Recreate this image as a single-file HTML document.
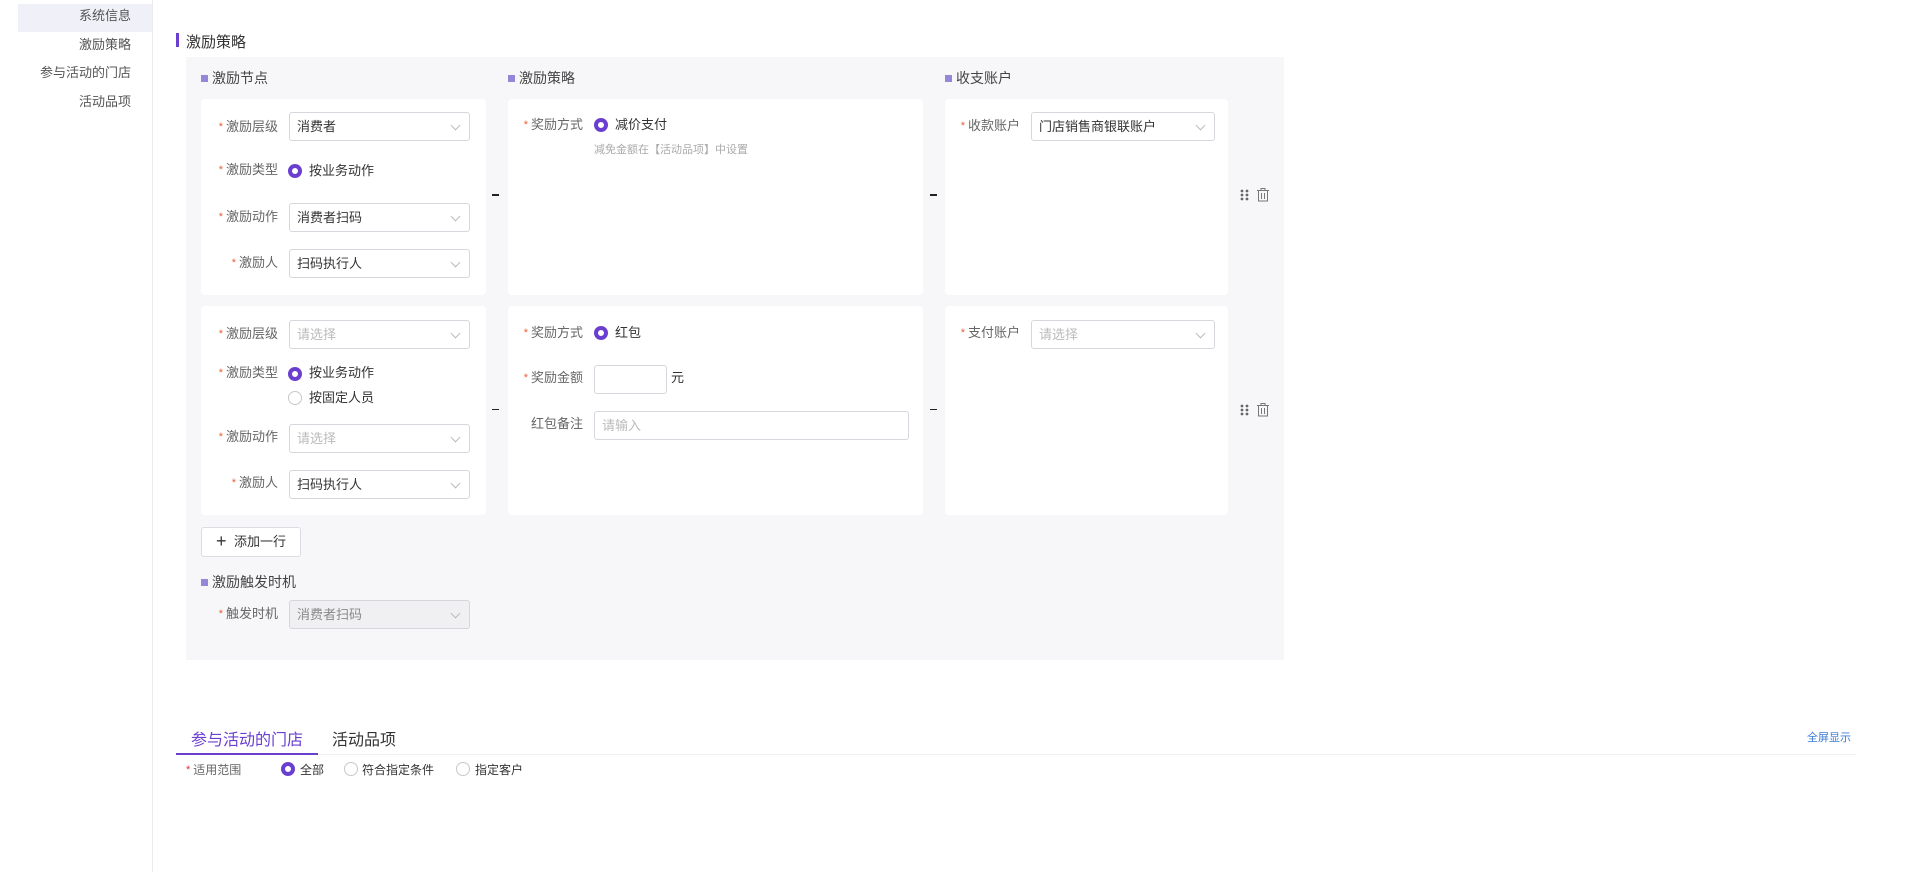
<!DOCTYPE html>
<html><head><meta charset="utf-8">
<style>
*{box-sizing:border-box;margin:0;padding:0}
body{width:1909px;height:872px;background:#fff;position:relative;overflow:hidden;font-family:"Liberation Sans","Noto Sans CJK SC",sans-serif;color:#333;font-size:13px}
.a{position:absolute;white-space:nowrap}
.side{left:0;top:0;width:153px;height:872px;border-right:1px solid #ececf0}
.si{right:1778px;font-size:13px;color:#555;line-height:16px}
.card{position:absolute;background:#fff;border-radius:4px}
.lbl{position:absolute;text-align:right;font-size:13px;color:#666;line-height:16px;white-space:nowrap}
.lbl b{color:#e8603c;font-weight:normal;font-size:11px;margin-right:3px;vertical-align:top}
.sel{position:absolute;height:29px;border:1px solid #d6d6dc;border-radius:3px;background:#fff;font-size:13px;color:#333;padding-left:7px;line-height:27px}
.sel.ph{color:#bbb}
.sel:after{content:"";position:absolute;right:10px;top:9px;width:6px;height:6px;border-right:1px solid #bbb;border-bottom:1px solid #bbb;transform:rotate(45deg)}
.inp{position:absolute;height:29px;border:1px solid #d6d6dc;border-radius:3px;background:#fff;color:#bbb;padding-left:7px;line-height:27px}
.rad{position:absolute;width:14px;height:14px;border-radius:50%;border:4px solid #6a3fd0;background:#fff}
.rad.o{border:1px solid #c8c8cc}
.hd{position:absolute;font-size:14px;color:#444;line-height:16px}
.hd:before{content:"";display:inline-block;width:7px;height:7px;background:#9586d8;margin-right:4px;vertical-align:1px}
.dash{position:absolute;width:7px;height:2px;background:#222}
.txt{position:absolute;font-size:13px;color:#333;line-height:16px;white-space:nowrap}
</style></head><body>
<div class="a side"></div>
<div class="a" style="left:18px;top:4px;width:134px;height:28px;background:#f0f0f8"></div>
<div class="a si" style="top:8px">系统信息</div>
<div class="a si" style="top:37px">激励策略</div>
<div class="a si" style="top:65px">参与活动的门店</div>
<div class="a si" style="top:94px">活动品项</div>

<div class="a" style="left:176px;top:33px;width:3px;height:14px;background:#6a3fd0"></div>
<div class="a" style="left:186px;top:31px;font-size:15px;color:#333">激励策略</div>

<div class="a" style="left:186px;top:57px;width:1098px;height:603px;background:#f7f7fa"></div>
<div class="hd" style="left:201px;top:70px">激励节点</div>
<div class="hd" style="left:508px;top:70px">激励策略</div>
<div class="hd" style="left:945px;top:70px">收支账户</div>

<div class="card" style="left:201px;top:99px;width:285px;height:196px"></div>
<div class="card" style="left:508px;top:99px;width:415px;height:196px"></div>
<div class="card" style="left:945px;top:99px;width:283px;height:196px"></div>
<div class="card" style="left:201px;top:306px;width:285px;height:209px"></div>
<div class="card" style="left:508px;top:306px;width:415px;height:209px"></div>
<div class="card" style="left:945px;top:306px;width:283px;height:209px"></div>

<div class="dash" style="left:492px;top:194px"></div>
<div class="dash" style="left:930px;top:194px"></div>
<div class="dash" style="left:492px;top:409px;height:1px"></div>
<div class="dash" style="left:930px;top:409px;height:1px"></div>

<div class="lbl" style="right:1631px;top:119px"><b>*</b>激励层级</div>
<div class="sel" style="left:289px;top:112px;width:181px">消费者</div>
<div class="lbl" style="right:1631px;top:162px"><b>*</b>激励类型</div>
<div class="rad" style="left:288px;top:164px"></div>
<div class="txt" style="left:309px;top:163px">按业务动作</div>
<div class="lbl" style="right:1631px;top:209px"><b>*</b>激励动作</div>
<div class="sel" style="left:289px;top:203px;width:181px">消费者扫码</div>
<div class="lbl" style="right:1631px;top:255px"><b>*</b>激励人</div>
<div class="sel" style="left:289px;top:249px;width:181px">扫码执行人</div>

<div class="lbl" style="right:1631px;top:326px"><b>*</b>激励层级</div>
<div class="sel ph" style="left:289px;top:320px;width:181px">请选择</div>
<div class="lbl" style="right:1631px;top:365px"><b>*</b>激励类型</div>
<div class="rad" style="left:288px;top:367px"></div>
<div class="txt" style="left:309px;top:365px">按业务动作</div>
<div class="rad o" style="left:288px;top:391px"></div>
<div class="txt" style="left:309px;top:390px">按固定人员</div>
<div class="lbl" style="right:1631px;top:429px"><b>*</b>激励动作</div>
<div class="sel ph" style="left:289px;top:424px;width:181px">请选择</div>
<div class="lbl" style="right:1631px;top:475px"><b>*</b>激励人</div>
<div class="sel" style="left:289px;top:470px;width:181px">扫码执行人</div>

<div class="lbl" style="right:1326px;top:117px"><b>*</b>奖励方式</div>
<div class="rad" style="left:594px;top:118px"></div>
<div class="txt" style="left:615px;top:117px">减价支付</div>
<div class="txt" style="left:594px;top:142px;font-size:11px;color:#aaa">减免金额在【活动品项】中设置</div>
<div class="lbl" style="right:1326px;top:325px"><b>*</b>奖励方式</div>
<div class="rad" style="left:594px;top:326px"></div>
<div class="txt" style="left:615px;top:325px">红包</div>
<div class="lbl" style="right:1326px;top:370px"><b>*</b>奖励金额</div>
<div class="inp" style="left:594px;top:365px;width:73px;height:29px"></div>
<div class="txt" style="left:671px;top:370px">元</div>
<div class="lbl" style="right:1326px;top:416px">红包备注</div>
<div class="inp" style="left:594px;top:411px;width:315px">请输入</div>

<div class="lbl" style="right:889px;top:118px"><b>*</b>收款账户</div>
<div class="sel" style="left:1031px;top:112px;width:184px">门店销售商银联账户</div>
<div class="lbl" style="right:889px;top:325px"><b>*</b>支付账户</div>
<div class="sel ph" style="left:1031px;top:320px;width:184px">请选择</div>

<svg class="a" style="left:1239px;top:188px" width="12" height="14"><g fill="#666"><circle cx="3" cy="3" r="1.4"/><circle cx="8" cy="3" r="1.4"/><circle cx="3" cy="7" r="1.4"/><circle cx="8" cy="7" r="1.4"/><circle cx="3" cy="11" r="1.4"/><circle cx="8" cy="11" r="1.4"/></g></svg>
<svg class="a" style="left:1256px;top:187px" width="14" height="15" fill="none" stroke="#777" stroke-width="1"><path d="M1 3.5h12M5 3.5V1.5h4v2M2.5 3.5v10.5h9V3.5M5.5 6v6M8.5 6v6"/></svg>
<svg class="a" style="left:1239px;top:403px" width="12" height="14"><g fill="#666"><circle cx="3" cy="3" r="1.4"/><circle cx="8" cy="3" r="1.4"/><circle cx="3" cy="7" r="1.4"/><circle cx="8" cy="7" r="1.4"/><circle cx="3" cy="11" r="1.4"/><circle cx="8" cy="11" r="1.4"/></g></svg>
<svg class="a" style="left:1256px;top:402px" width="14" height="15" fill="none" stroke="#777" stroke-width="1"><path d="M1 3.5h12M5 3.5V1.5h4v2M2.5 3.5v10.5h9V3.5M5.5 6v6M8.5 6v6"/></svg>

<div class="a" style="left:201px;top:527px;width:100px;height:30px;background:#fff;border:1px solid #dcdce2;border-radius:3px"></div>
<div class="a" style="left:216px;top:533px;font-size:18px;line-height:16px;color:#333">+</div>
<div class="txt" style="left:234px;top:534px">添加一行</div>

<div class="hd" style="left:201px;top:574px">激励触发时机</div>
<div class="lbl" style="right:1631px;top:606px"><b>*</b>触发时机</div>
<div class="sel" style="left:289px;top:600px;width:181px;background:#f0f0f3;color:#888">消费者扫码</div>

<div class="a" style="left:176px;top:754px;width:1680px;height:1px;background:#f0f0f4"></div>
<div class="a" style="left:176px;top:753px;width:142px;height:2px;background:#6a3fd0"></div>
<div class="a" style="left:191px;top:726px;font-size:16px;color:#6a3fd0">参与活动的门店</div>
<div class="a" style="left:332px;top:726px;font-size:16px;color:#333">活动品项</div>
<div class="a" style="left:1807px;top:729px;font-size:11px;color:#3a7bd5">全屏显示</div>

<div class="lbl" style="left:186px;top:762px;font-size:12px"><b style="color:#d33">*</b>适用范围</div>
<div class="rad" style="left:281px;top:762px"></div>
<div class="txt" style="left:300px;top:762px;font-size:12px">全部</div>
<div class="rad o" style="left:344px;top:762px"></div>
<div class="txt" style="left:362px;top:762px;font-size:12px">符合指定条件</div>
<div class="rad o" style="left:456px;top:762px"></div>
<div class="txt" style="left:475px;top:762px;font-size:12px">指定客户</div>
</body></html>
